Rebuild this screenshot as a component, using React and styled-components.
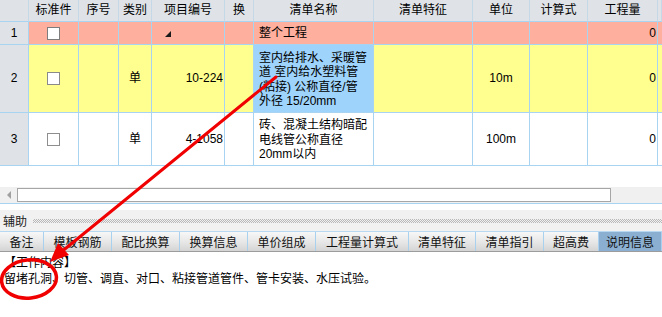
import React from "react";
import styled, { createGlobalStyle } from "styled-components";

const Global = createGlobalStyle`
  html, body { margin: 0; padding: 0; background: #fff; }
  body { font-family: "Liberation Sans", "Noto Sans CJK SC", sans-serif; font-size: 12px; color: #000; }
`;

const COLS = "29px 50px 40px 33px 73px 29px 120px 99px 57px 58px 70px 1fr";
const GRID = "#a9d4f1";

const Page = styled.div`
  position: relative;
  width: 662px;
  height: 317px;
  overflow: hidden;
  display: flex;
  flex-direction: column;
  background: #fff;
`;

const TableArea = styled.div`
  height: 187px;
  background: #fff;
  display: flex;
  flex-direction: column;
`;

const Row = styled.div`
  display: grid;
  grid-template-columns: ${COLS};
  height: ${(p) => p.$h}px;
  background: ${(p) => p.$bg || "#fff"};
`;

const Cell = styled.div`
  box-sizing: border-box;
  border-right: 1px solid ${GRID};
  border-bottom: 1px solid ${GRID};
  display: flex;
  align-items: center;
  justify-content: ${(p) => p.$align || "flex-start"};
  padding: ${(p) => p.$pad || "0 3px"};
  background: ${(p) => p.$bg || "transparent"};
  white-space: nowrap;
  line-height: 14.5px;
  overflow: hidden;
`;

const HeadCell = styled(Cell)`
  background: #dfe3e8;
  border-right-color: #c4d8e8;
  justify-content: center;
  padding: 0;
`;

const NumCell = styled(Cell)`
  background: #dfe3e8;
  justify-content: center;
  padding: 0;
`;

const Check = styled.span`
  width: 13px;
  height: 13px;
  box-sizing: border-box;
  border: 1px solid ${(p) => p.$c || "#868686"};
  background: #fff;
  display: inline-block;
`;

const Corner = styled.span`
  width: 0;
  height: 0;
  border-left: 6px solid transparent;
  border-bottom: 6px solid #1a1a1a;
  margin-left: 13px;
  margin-top: 1px;
`;

const MultiLine = styled.div`
  white-space: nowrap;
  line-height: 14.5px;
  padding-top: ${(p) => p.$pt || 0}px;
`;

const ScrollBar = styled.div`
  height: 16px;
  background: #f0f0f0;
  display: flex;
  align-items: flex-start;
  box-sizing: border-box;
  padding-top: 1px;
`;

const ScrollBtn = styled.div`
  width: 17px;
  height: 14px;
  display: flex;
  align-items: center;
  justify-content: center;
  &::before {
    content: "";
    width: 0;
    height: 0;
    border-top: 4px solid transparent;
    border-bottom: 4px solid transparent;
    border-right: 4px solid #a0a0a0;
  }
`;

const Thumb = styled.div`
  width: 594px;
  height: 14px;
  box-sizing: border-box;
  border: 1px solid #a6a6a6;
  background: #fff;
`;

const Divider = styled.div`
  height: 7px;
  border-top: 1px solid ${GRID};
  box-sizing: border-box;
  background: #fff;
`;

const AuxBar = styled.div`
  height: 21px;
  background: #f1f1f1;
  display: flex;
  align-items: center;
  padding-left: 3px;
  gap: 6px;
  font-family: "Noto Sans CJK SC", sans-serif;
  font-size: 12px;
  color: #222;
`;

const Dots = styled.div`
  flex: 1;
  height: 4px;
  margin-top: 1px;
  background-image: repeating-conic-gradient(#b8b8b8 0 25%, transparent 0 50%);
  background-size: 2px 2px;
`;

const TabBar = styled.div`
  height: 21px;
  display: flex;
  box-sizing: border-box;
  border-top: 1px solid #b6d8f0;
  border-bottom: 1px solid #9c9c9c;
`;

const Tab = styled.div`
  width: ${(p) => p.$w}px;
  flex: ${(p) => (p.$grow ? 1 : "none")};
  box-sizing: border-box;
  border-right: 1px solid #a9d0ec;
  display: flex;
  align-items: center;
  justify-content: center;
  font-family: "Noto Sans CJK SC", sans-serif;
  font-size: 12px;
  color: #111;
  white-space: nowrap;
  background: ${(p) =>
    p.$active ? "#8bafd1" : "linear-gradient(#f7f7f7, #e6e6e6 55%, #d4d4d4)"};
`;

const Content = styled.div`
  flex: 1;
  padding: 2px 0 0 4px;
  font-family: "Noto Sans CJK SC", sans-serif;
  font-size: 12px;
  line-height: 16px;
  color: #000;
`;

const Overlay = styled.svg`
  position: absolute;
  left: 0;
  top: 0;
  width: 662px;
  height: 317px;
  pointer-events: none;
`;

const headers = ["", "标准件", "序号", "类别", "项目编号", "换", "清单名称", "清单特征", "单位", "计算式", "工程量", ""];

const tabs = [
  ["备注", 44],
  ["模板钢筋", 68],
  ["配比换算", 68],
  ["换算信息", 68],
  ["单价组成", 68],
  ["工程量计算式", 93],
  ["清单特征", 67],
  ["清单指引", 68],
  ["超高费", 55],
  ["说明信息", 63, true],
];

const Lines = ({ lines, pt }) => (
  <MultiLine $pt={pt}>
    {lines.map((l, i) => (
      <div key={i}>{l}</div>
    ))}
  </MultiLine>
);

export default function App() {
  return (
    <>
      <Global />
      <Page>
        <TableArea>
          <Row $h={22}>
            {headers.map((h, i) => (
              <HeadCell key={i}>{h}</HeadCell>
            ))}
          </Row>
          <Row $h={23} $bg="#ffaf9d">
            <NumCell>1</NumCell>
            <Cell $align="center"><Check $c="#7d7d7d" /></Cell>
            <Cell />
            <Cell />
            <Cell $pad="0"><Corner /></Cell>
            <Cell />
            <Cell $pad="0 4px 0 5px">整个工程</Cell>
            <Cell />
            <Cell />
            <Cell />
            <Cell $align="flex-end" $pad="0 1px 0 3px">0</Cell>
            <Cell />
          </Row>
          <Row $h={68} $bg="#ffff8f">
            <NumCell>2</NumCell>
            <Cell $align="center"><Check $c="#8a8a8a" /></Cell>
            <Cell />
            <Cell $align="center">单</Cell>
            <Cell $align="flex-end" $pad="0 1px 0 3px">10-224</Cell>
            <Cell />
            <Cell $bg="#9ed3fb" $pad="0 2px 0 5px">
              <Lines pt={2} lines={["室内给排水、采暖管", "道 室内给水塑料管", "(粘接) 公称直径/管", "外径 15/20mm"]} />
            </Cell>
            <Cell />
            <Cell $align="center">10m</Cell>
            <Cell />
            <Cell $align="flex-end" $pad="0 1px 0 3px">0</Cell>
            <Cell />
          </Row>
          <Row $h={53}>
            <NumCell>3</NumCell>
            <Cell $align="center"><Check $c="#8e8e8e" /></Cell>
            <Cell />
            <Cell $align="center">单</Cell>
            <Cell $align="flex-end" $pad="0 1px 0 3px">4-1058</Cell>
            <Cell />
            <Cell $pad="0 2px 0 5px">
              <Lines pt={2} lines={["砖、混凝土结构暗配", "电线管公称直径", "20mm以内"]} />
            </Cell>
            <Cell />
            <Cell $align="center">100m</Cell>
            <Cell />
            <Cell $align="flex-end" $pad="0 1px 0 3px">0</Cell>
            <Cell />
          </Row>
        </TableArea>
        <ScrollBar>
          <ScrollBtn />
          <Thumb />
        </ScrollBar>
        <Divider />
        <AuxBar>
          <span>辅助</span>
          <Dots />
        </AuxBar>
        <TabBar>
          {tabs.map(([t, w, active], i) => (
            <Tab key={i} $w={w} $active={active} $grow={active}>
              {t}
            </Tab>
          ))}
        </TabBar>
        <Content>
          <div>【工作内容】</div>
          <div>留堵孔洞、切管、调直、对口、粘接管道管件、管卡安装、水压试验。</div>
        </Content>
        <Overlay viewBox="0 0 662 317">
          <line x1="276" y1="77" x2="60" y2="253" stroke="#f00000" strokeWidth="3" strokeLinecap="round" />
          <polygon points="50,262 69,255 58,243" fill="#f00000" />
          <ellipse cx="29" cy="279" rx="27.5" ry="19" fill="none" stroke="#f00000" strokeWidth="3.5" transform="rotate(-6 29 279)" />
        </Overlay>
      </Page>
    </>
  );
}
